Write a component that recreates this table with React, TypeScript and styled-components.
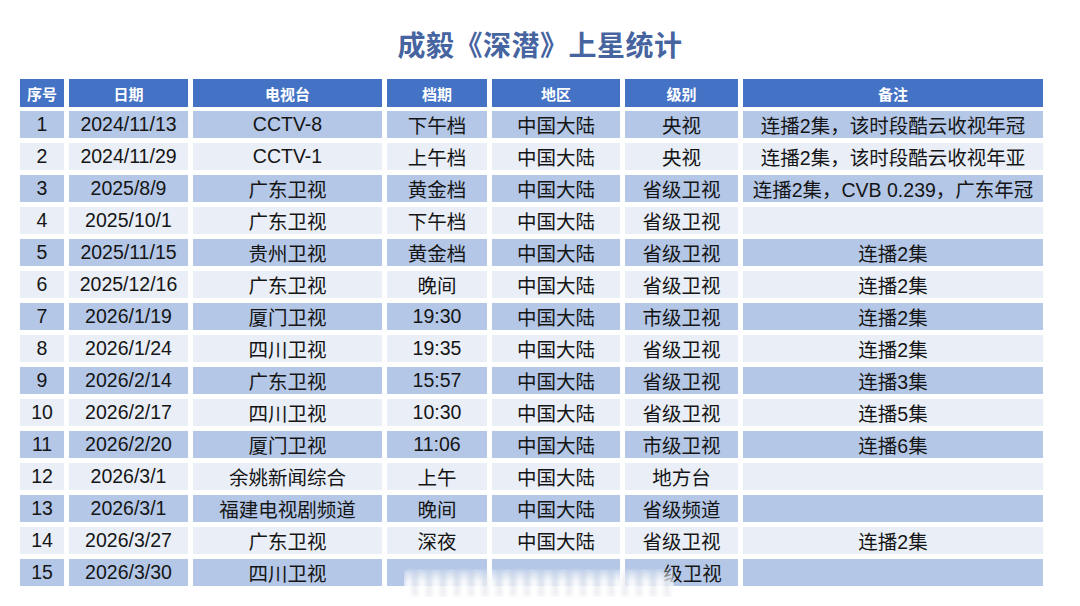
import React from "react";
import styled, { createGlobalStyle } from "styled-components";

const Global = createGlobalStyle`
  html, body { margin: 0; padding: 0; background: #ffffff; }
  body { font-family: "Liberation Sans", "Noto Sans CJK SC", sans-serif; }
`;

const Page = styled.div`
  width: 1080px;
  height: 606px;
  background: #ffffff;
  overflow: hidden;
`;

const Title = styled.h1`
  margin: 0;
  padding-top: 31px;
  height: 32px;
  margin-bottom: 16px;
  text-align: center;
  font-family: "Liberation Sans", "Noto Sans CJK SC", sans-serif;
  font-size: 28px;
  line-height: 32px;
  font-weight: 700;
  color: #46649f;
  letter-spacing: 0.5px;
`;

const TableWrap = styled.div`
  position: relative;
  margin-left: 20px;
  width: 1023px;
`;

const Grid = styled.div`
  display: grid;
  grid-template-columns: 44px 119px 189px 100px 128px 113px 300px;
  column-gap: 5px;
  row-gap: 5px;
  grid-auto-rows: 27px;
`;

const HeadCell = styled.div`
  background: #4472c4;
  color: #ffffff;
  font-weight: 700;
  font-size: 15px;
  display: flex;
  align-items: center;
  justify-content: center;
  margin-bottom: -1px;
`;

const Cell = styled.div<{ $odd: boolean }>`
  background: ${(p) => (p.$odd ? "#b4c7e7" : "#e9eef7")};
  color: #151515;
  font-size: 19.5px;
  display: flex;
  align-items: center;
  justify-content: center;
  white-space: nowrap;
  overflow: hidden;
`;

const Shifted = styled.span`
  padding-left: 22px;
`;

const Smudge = styled.div`
  position: absolute;
  left: 384px;
  top: 490px;
  width: 270px;
  height: 28px;
  filter: blur(2.5px);
  background: repeating-linear-gradient(
    90deg,
    rgba(255, 255, 255, 0.9) 0px,
    rgba(255, 255, 255, 0.9) 8px,
    rgba(190, 198, 212, 0.6) 11px,
    rgba(255, 255, 255, 0.9) 14px
  );
  border-radius: 4px;
  -webkit-mask-image: linear-gradient(180deg, rgba(0, 0, 0, 0.35) 0%, #000 45%, #000 100%);
  mask-image: linear-gradient(180deg, rgba(0, 0, 0, 0.35) 0%, #000 45%, #000 100%);
`;

const headers = ["序号", "日期", "电视台", "档期", "地区", "级别", "备注"];

const rows: string[][] = [
  ["1", "2024/11/13", "CCTV-8", "下午档", "中国大陆", "央视", "连播2集，该时段酷云收视年冠"],
  ["2", "2024/11/29", "CCTV-1", "上午档", "中国大陆", "央视", "连播2集，该时段酷云收视年亚"],
  ["3", "2025/8/9", "广东卫视", "黄金档", "中国大陆", "省级卫视", "连播2集，CVB 0.239，广东年冠"],
  ["4", "2025/10/1", "广东卫视", "下午档", "中国大陆", "省级卫视", ""],
  ["5", "2025/11/15", "贵州卫视", "黄金档", "中国大陆", "省级卫视", "连播2集"],
  ["6", "2025/12/16", "广东卫视", "晚间", "中国大陆", "省级卫视", "连播2集"],
  ["7", "2026/1/19", "厦门卫视", "19:30", "中国大陆", "市级卫视", "连播2集"],
  ["8", "2026/1/24", "四川卫视", "19:35", "中国大陆", "省级卫视", "连播2集"],
  ["9", "2026/2/14", "广东卫视", "15:57", "中国大陆", "省级卫视", "连播3集"],
  ["10", "2026/2/17", "四川卫视", "10:30", "中国大陆", "省级卫视", "连播5集"],
  ["11", "2026/2/20", "厦门卫视", "11:06", "中国大陆", "市级卫视", "连播6集"],
  ["12", "2026/3/1", "余姚新闻综合", "上午", "中国大陆", "地方台", ""],
  ["13", "2026/3/1", "福建电视剧频道", "晚间", "中国大陆", "省级频道", ""],
  ["14", "2026/3/27", "广东卫视", "深夜", "中国大陆", "省级卫视", "连播2集"],
  ["15", "2026/3/30", "四川卫视", "", "", "级卫视", ""],
];

export default function App() {
  return (
    <Page>
      <Global />
      <Title>成毅《深潜》上星统计</Title>
      <TableWrap>
        <Grid>
          {headers.map((h) => (
            <HeadCell key={h}>{h}</HeadCell>
          ))}
          {rows.map((r, i) =>
            r.map((c, j) => (
              <Cell key={`${i}-${j}`} $odd={i % 2 === 0}>
                {j === 5 && i === 14 ? <Shifted>{c}</Shifted> : c}
              </Cell>
            ))
          )}
        </Grid>
        <Smudge />
      </TableWrap>
    </Page>
  );
}
